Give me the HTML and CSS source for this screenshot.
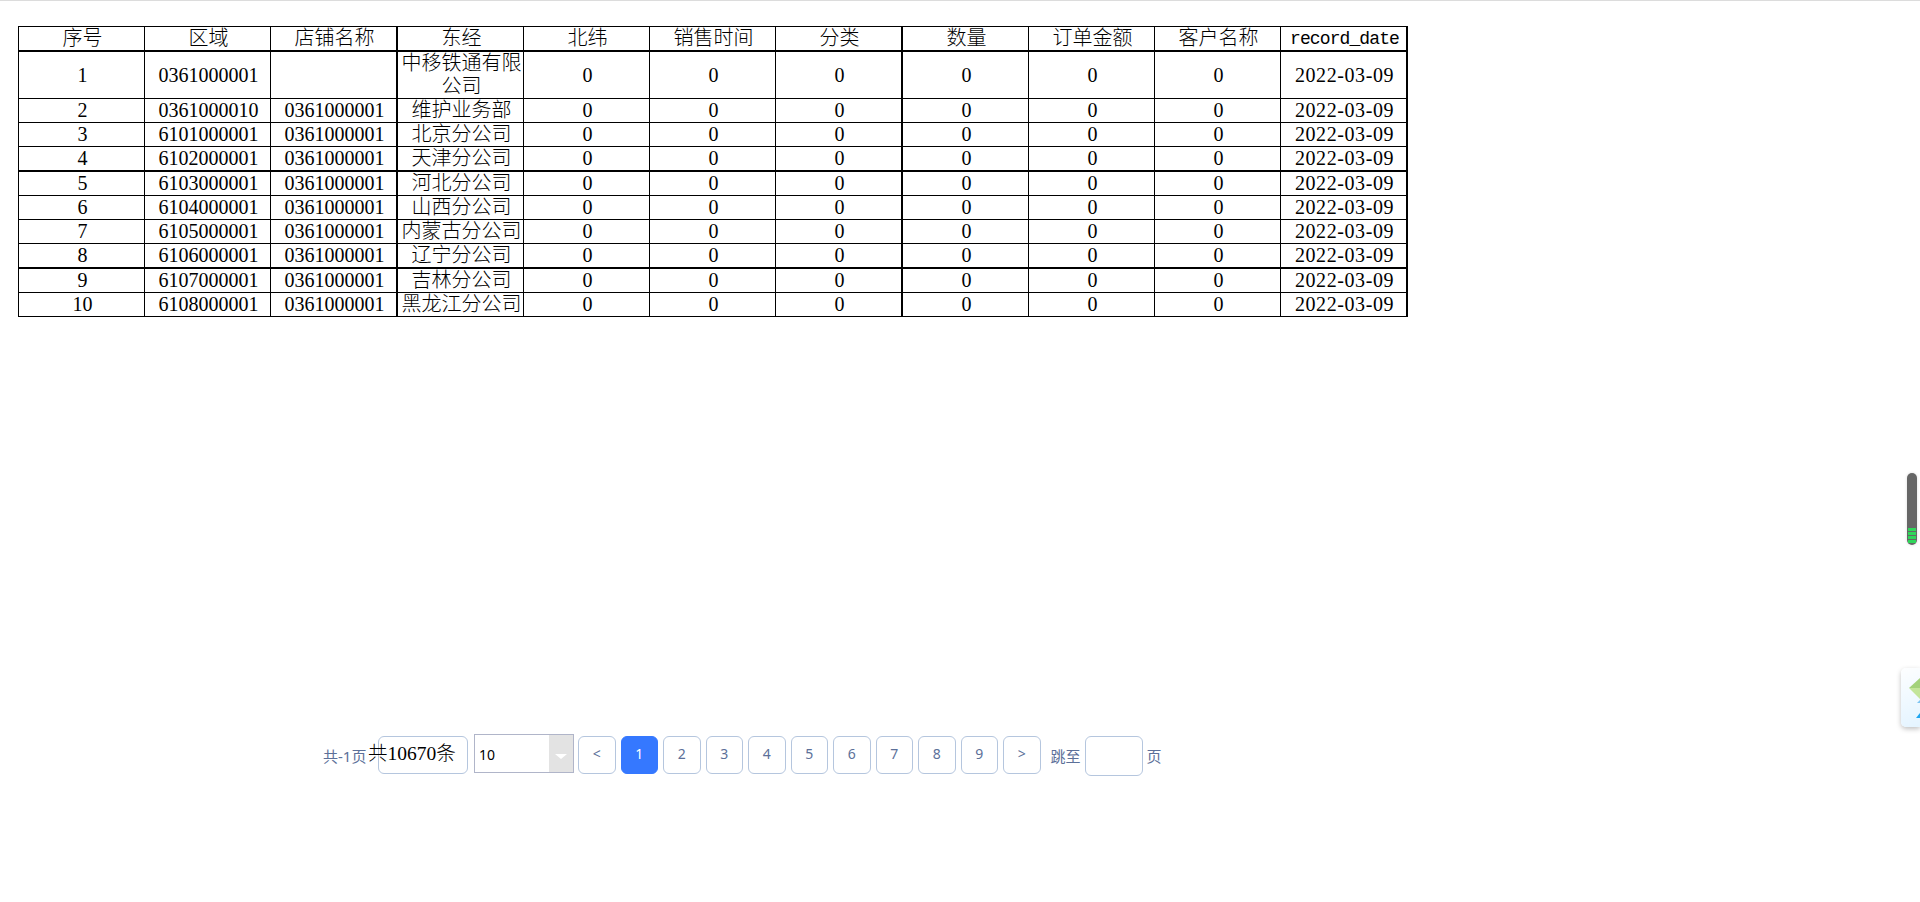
FILE: index.html
```html
<!DOCTYPE html>
<html lang="zh-CN">
<head>
<meta charset="utf-8">
<title>订单列表</title>
<link rel="stylesheet" href="styles.css">
</head>
<body>
<table class="data">
<colgroup><col class="c126"><col class="c126"><col class="c127"><col class="c126"><col class="c126"><col class="c126"><col class="c127"><col class="c126"><col class="c126"><col class="c126"><col class="c127"></colgroup>
<thead><tr><th>序号</th><th>区域</th><th>店铺名称</th><th>东经</th><th>北纬</th><th>销售时间</th><th>分类</th><th>数量</th><th>订单金额</th><th>客户名称</th><th class="mono">record_date</th></tr></thead>
<tbody>
<tr><td>1</td><td>0361000001</td><td></td><td>中移铁通有限公司</td><td>0</td><td>0</td><td>0</td><td>0</td><td>0</td><td>0</td><td class="date">2022-03-09</td></tr>
<tr><td>2</td><td>0361000010</td><td>0361000001</td><td>维护业务部</td><td>0</td><td>0</td><td>0</td><td>0</td><td>0</td><td>0</td><td class="date">2022-03-09</td></tr>
<tr><td>3</td><td>6101000001</td><td>0361000001</td><td>北京分公司</td><td>0</td><td>0</td><td>0</td><td>0</td><td>0</td><td>0</td><td class="date">2022-03-09</td></tr>
<tr class="tb"><td>4</td><td>6102000001</td><td>0361000001</td><td>天津分公司</td><td>0</td><td>0</td><td>0</td><td>0</td><td>0</td><td>0</td><td class="date">2022-03-09</td></tr>
<tr><td>5</td><td>6103000001</td><td>0361000001</td><td>河北分公司</td><td>0</td><td>0</td><td>0</td><td>0</td><td>0</td><td>0</td><td class="date">2022-03-09</td></tr>
<tr><td>6</td><td>6104000001</td><td>0361000001</td><td>山西分公司</td><td>0</td><td>0</td><td>0</td><td>0</td><td>0</td><td>0</td><td class="date">2022-03-09</td></tr>
<tr><td>7</td><td>6105000001</td><td>0361000001</td><td>内蒙古分公司</td><td>0</td><td>0</td><td>0</td><td>0</td><td>0</td><td>0</td><td class="date">2022-03-09</td></tr>
<tr class="tb"><td>8</td><td>6106000001</td><td>0361000001</td><td>辽宁分公司</td><td>0</td><td>0</td><td>0</td><td>0</td><td>0</td><td>0</td><td class="date">2022-03-09</td></tr>
<tr><td>9</td><td>6107000001</td><td>0361000001</td><td>吉林分公司</td><td>0</td><td>0</td><td>0</td><td>0</td><td>0</td><td>0</td><td class="date">2022-03-09</td></tr>
<tr><td>10</td><td>6108000001</td><td>0361000001</td><td>黑龙江分公司</td><td>0</td><td>0</td><td>0</td><td>0</td><td>0</td><td>0</td><td class="date">2022-03-09</td></tr>
</tbody>
</table>

<nav class="pager">
  <span class="pages">共-1页</span>
  <span class="total">共10670条</span>
  <div class="size"><span class="size-val">10</span><span class="size-arrow"><i class="tri"></i></span></div>
  <div class="btns">
    <a class="btn">&lt;</a>
    <a class="btn on">1</a>
    <a class="btn">2</a>
    <a class="btn">3</a>
    <a class="btn">4</a>
    <a class="btn">5</a>
    <a class="btn">6</a>
    <a class="btn">7</a>
    <a class="btn">8</a>
    <a class="btn">9</a>
    <a class="btn">&gt;</a>
  </div>
  <span class="jump">跳至</span>
  <span class="jump-input"></span>
  <span class="jump-end">页</span>
</nav>

<div class="handle"><div class="bars"><i></i><i></i><i></i><i></i></div></div>
<aside class="float-card">
  <svg class="float-icon" width="19" height="59" viewBox="0 0 19 59">
    <polygon points="8,20 19,10 19,20" fill="#a3d27a"/>
    <polygon points="8,20 19,20 19,31" fill="#c3e59a"/>
    <polygon points="16,35 19,32 19,35" fill="#7cc4f2"/>
    <polygon points="15,50 19,45 19,50" fill="#1fa6f0"/>
  </svg>
</aside>
</body>
</html>
```
FILE: styles.css
```css
html, body { margin: 0; padding: 0; }
body {
  height: 902px;
  overflow: hidden;
  background: #fff;
  border-top: 1px solid #dcdcdc;
  box-sizing: border-box;
  font-family: "Liberation Serif", "Noto Sans CJK SC", serif;
  color: #000;
}
.data {
  margin: 25px 0 0 18px;
  border-collapse: separate;
  border-spacing: 0;
  table-layout: fixed;
  width: 1390px;
  border-top: 1px solid #000;
  border-left: 1px solid #000;
  font-size: 20px;
  line-height: 23px;
  box-sizing: border-box;
}
.c126 { width: 126px; }
.c127 { width: 127px; }
.data th, .data td {
  padding: 0 0 0 2px;
  height: 24px;
  box-sizing: border-box;
  border-right: 1px solid #000;
  border-bottom: 1px solid #000;
  text-align: center;
  vertical-align: middle;
  font-weight: 300;
}
.data th { border-bottom-width: 2px; height: 25px; }
.data .tb td { border-bottom-width: 2px; height: 25px; }
.data th:nth-child(3), .data td:nth-child(3),
.data th:nth-child(7), .data td:nth-child(7),
.data th:last-child, .data td:last-child { border-right-width: 2px; }
.data .mono { font-family: "Liberation Mono", monospace; font-size: 18px; letter-spacing: -0.9px; line-height: 21px; padding-top: 2px; }
.data .date { letter-spacing: 0.58px; }

.pager {
  display: flex;
  align-items: flex-start;
  margin: 417px 0 0 323px;
  color: #5c7099;
  font-family: "Noto Sans", "Noto Sans CJK SC", sans-serif;
  font-size: 15px;
}
.pages { margin-top: 11px; width: 55px; white-space: nowrap; }
.total {
  box-sizing: border-box;
  width: 90px;
  height: 38px;
  margin-top: 2px;
  border: 1px solid #b5c6de;
  border-radius: 6px;
  color: #000;
  font-family: "Liberation Serif", "Noto Sans CJK SC", serif;
  font-size: 19.5px;
  font-weight: 300;
  line-height: 33px;
  text-indent: -11px;
  white-space: nowrap;
}
.size {
  box-sizing: border-box;
  display: flex;
  width: 100px;
  height: 39px;
  margin-left: 6px;
  border: 1px solid #b0b5c9;
}
.size-val { flex: 1; padding-left: 4px; color: #000; font-size: 14px; line-height: 40px; }
.size-arrow { width: 24px; background: #e3e3e3; display: flex; align-items: center; justify-content: center; }
.tri {
  width: 0; height: 0; margin-top: 6px;
  border-left: 6px solid transparent;
  border-right: 6px solid transparent;
  border-top: 5px solid #fff;
}
.btns { display: flex; gap: 5px; margin: 2px 0 0 4px; }
.btn {
  box-sizing: border-box;
  width: 37.5px;
  height: 38px;
  border: 1px solid #b5c6de;
  border-radius: 6px;
  text-align: center;
  font-size: 14px;
  line-height: 34px;
}
.btn.on { background: #3578ff; border-color: #3578ff; color: #fff; }
.jump { margin: 11px 0 0 10px; white-space: nowrap; }
.jump-input {
  box-sizing: border-box;
  width: 58px;
  height: 40px;
  margin: 2px 0 0 4px;
  border: 1px solid #b5c6de;
  border-radius: 6px;
}
.jump-end { margin: 11px 0 0 4px; }

.handle {
  position: fixed;
  right: 3px;
  top: 473px;
  width: 10px;
  height: 72px;
  border-radius: 5px;
  background: #666;
  box-shadow: 0 0 3px rgba(0,0,0,.15);
}
.bars {
  position: absolute;
  left: 1px;
  right: 1px;
  top: 55px;
  display: flex;
  flex-direction: column;
  gap: 1px;
}
.bars i { display: block; height: 3px; background: #2fd65a; }
.float-card {
  position: fixed;
  right: 0;
  top: 668px;
  width: 19px;
  height: 59px;
  border-radius: 5px 0 0 5px;
  background: linear-gradient(160deg, #fdfeff, #e4f4ff);
  box-shadow: 0 2px 5px rgba(0,0,0,.25);
}
.float-icon { display: block; }
```
